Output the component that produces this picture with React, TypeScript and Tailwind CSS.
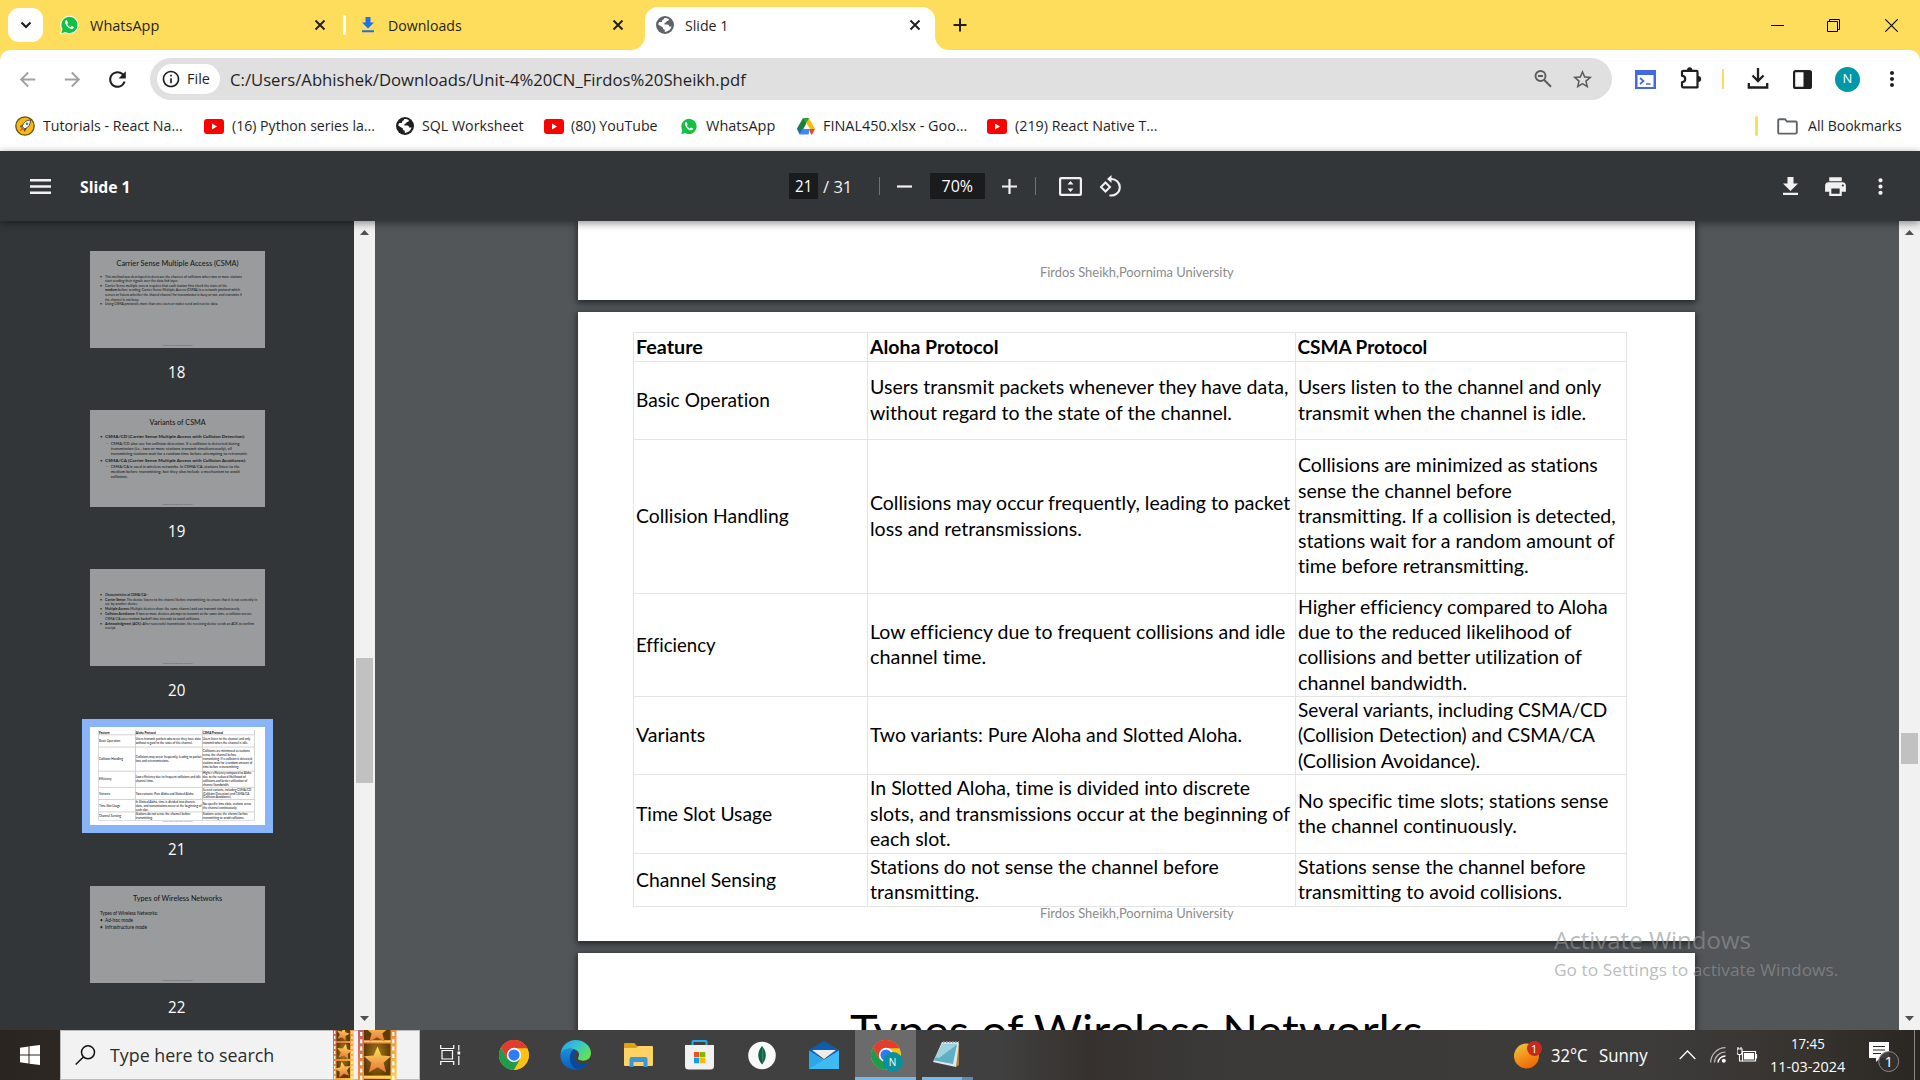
import { useLayoutEffect, useRef, useState, type ReactNode } from "react";
import {
  MdArrowBack, MdArrowForward, MdRefresh, MdInfoOutline, MdStarOutline, MdMoreVert, MdPrint,
} from "react-icons/md";

const UI = "font-['Open_Sans','Noto_Sans',sans-serif]";
const SLIDE = "font-[Lato,'Open_Sans',sans-serif] [font-variant-ligatures:none]";

/* One line of text, condensed or widened horizontally to take up exactly w pixels. */
function T({ w, className = "", children }: { w: number; className?: string; children: ReactNode }) {
  const ref = useRef<HTMLSpanElement>(null);
  const [k, setK] = useState(1);
  useLayoutEffect(() => {
    if (ref.current) setK(w / ref.current.offsetWidth);
  }, [w]);
  return (
    <span className={`block shrink-0 ${className}`} style={{ width: w }}>
      <span ref={ref} className="inline-block origin-left whitespace-nowrap" style={{ transform: `scaleX(${k})` }}>
        {children}
      </span>
    </span>
  );
}

function Cross({ className = "" }) {
  return (
    <svg className={`h-3 w-3 shrink-0 ${className}`} viewBox="0 0 12 12">
      <path d="M1.5 1.5l9 9M10.5 1.5l-9 9" stroke="#1f1f1f" strokeWidth="1.9" />
    </svg>
  );
}

function Globe({ className = "" }) {
  return (
    <svg className={`h-[18px] w-[18px] shrink-0 ${className}`} viewBox="0 0 18 18">
      <circle cx="9" cy="9" r="9" fill="currentColor" />
      <path d="M8 2.200c2-.4 4 .2 5 1.300-.3 1.300-1.200 1.500-2.300 1.600-.2 1.300-.7 1.700-2.200 1.800v1.600h3c1.200.2 1.500 1 1.600 2.100h2.400c-.6 2.800-3.200 5.200-6.700 5.300v-2.100c-1.400-.2-1.900-.9-1.900-2.300L2.200 8.600c.2-1 .5-1.900 1-2.600h2.700C6 4.200 6.800 3.400 8 3.300z" fill="#fff" />
    </svg>
  );
}

function WhatsAppIcon({ className = "" }) {
  return (
    <svg className={`shrink-0 ${className}`} viewBox="0 0 20 20">
      <path d="M.6 19.4l1.3-4.9A9.2 9.2 0 1 1 5.4 18z" fill="#fff" stroke="#fff" strokeWidth="1" />
      <path d="M1.3 18.7l1.3-4.5A8.5 8.5 0 1 1 5.7 17.3z" fill="#12c143" />
      <path d="M7.4 5.4c-.3-.6-.9-.5-1.300-.1-1.300 1.300-.9 3.200 1.100 5.700 2.300 2.700 4.600 3.700 6.300 2.900.9-.5 1.100-1.200 1-1.700l-2.200-1.200c-.5 0-.9 1.100-1.400 1.100-1-.3-2.900-2-3.200-3 0-.5.8-.9.800-1.400z" fill="#fff" />
    </svg>
  );
}

function YouTubeIcon({ className = "" }) {
  return (
    <svg className={`h-[15px] w-5 shrink-0 ${className}`} viewBox="0 0 20 15">
      <rect width="20" height="15" rx="3" fill="#f00" />
      <path d="M8 4.500l5 3-5 3z" fill="#fff" />
    </svg>
  );
}

function DriveIcon({ className = "" }) {
  return (
    <svg className={`h-[17px] w-[18px] shrink-0 ${className}`} viewBox="0 0 18 17">
      <path d="M6 0h3v6L4 15.500 0 10.500z" fill="#188038" />
      <path d="M6 0h6l6 11h-5z" fill="#fbbc04" />
      <path d="M6 0h6L9 5.500z" fill="#2a9d4e" />
      <path d="M0 11h5.500l-2.800 5.500z" fill="#1967d2" />
      <path d="M5.500 11H13l-1.500 5.500h-9z" fill="#4285f4" />
      <path d="M12.500 11H18l-3 5.500h-1.200z" fill="#ea4335" />
    </svg>
  );
}

function RocketCoin() {
  return (
    <svg className="h-5 w-5 shrink-0" viewBox="0 0 20 20">
      <circle cx="10" cy="10" r="9.200" fill="#f5b914" stroke="#6b5416" strokeWidth="1.300" />
      <path d="M15.500 4c-4 0-7 2.500-8.300 6.500l2.500 2.500c3.800-1.500 5.800-4.500 5.800-9z" fill="#fff" stroke="#3d3426" strokeWidth=".9" />
      <path d="M7.500 9L5 10.500l2 .8zM11 12.700L9.700 15.500 8.800 13z" fill="#3b7bb8" stroke="#3d3426" strokeWidth=".5" />
      <path d="M7 11l-2.500 4.500L9 13z" fill="#e8552b" />
      <circle cx="12" cy="7.800" r="1.300" fill="#3b7bb8" />
    </svg>
  );
}

function TabStrip() {
  return (
    <div className="flex h-[50px] items-center bg-[#ffdd5c] pl-2 text-[14.5px] text-[#1f1f1f]">
      <div className="flex h-[34px] w-[35px] shrink-0 items-center justify-center rounded-[11px] bg-white">
        <svg className="h-3 w-3" viewBox="0 0 12 12"><path d="M1.500 3.500L6 8l4.500-4.500" fill="none" stroke="#1f1f1f" strokeWidth="2.200" /></svg>
      </div>
      <WhatsAppIcon className="ml-[17px] h-5 w-[19px]" />
      <T w={69} className="ml-[11px] pt-px">WhatsApp</T>
      <Cross className="ml-[155px]" />
      <div className="ml-[17px] h-5 w-[3px] shrink-0 rounded bg-white" />
      <svg className="ml-[15px] h-4 w-[14px] shrink-0" viewBox="0 0 14 16">
        <path d="M4.500 0h5v5.500H13L7 11.500 1 5.500h3.500zM1 13.300h12v2H1z" fill="#1a73e8" />
      </svg>
      <T w={74} className="ml-[13px] pt-px">Downloads</T>
      <Cross className="ml-[150px]" />
      <div className="relative ml-[21px] flex h-[43px] w-[290px] shrink-0 items-center self-end rounded-t-[13px] bg-white pb-[7px] pl-[11px]">
        <svg className="absolute bottom-0 -left-[14px] h-[14px] w-[14px]" viewBox="0 0 14 14"><path d="M14 0v14H0A14 14 0 0 0 14 0z" fill="#fff" /></svg>
        <svg className="absolute bottom-0 -right-[14px] h-[14px] w-[14px]" viewBox="0 0 14 14"><path d="M0 0v14h14A14 14 0 0 1 0 0z" fill="#fff" /></svg>
        <Globe className="text-[#5f6368]" />
        <T w={43} className="ml-[11px] pt-px">Slide 1</T>
        <Cross className="ml-[181px]" />
      </div>
      <svg className="ml-[18px] h-[14px] w-[14px] shrink-0" viewBox="0 0 14 14"><path d="M7 .5v13M.5 7h13" stroke="#1f1f1f" strokeWidth="2" /></svg>
      <svg className="ml-auto h-[13px] w-[13px] shrink-0" viewBox="0 0 13 13"><path d="M0 6.500h13" stroke="#000" /></svg>
      <svg className="ml-[43px] h-[13px] w-[13px] shrink-0" viewBox="0 0 13 13"><path d="M.5 2.500h10v10H.5zM2.500 2.500v-2h10v10h-2" fill="none" stroke="#000" /></svg>
      <svg className="ml-[45px] mr-[22px] h-[13px] w-[13px] shrink-0" viewBox="0 0 13 13"><path d="M.3 .3l12.400 12.400M12.700 .3L.3 12.700" stroke="#000" strokeWidth="1.100" /></svg>
    </div>
  );
}

function AddressBar() {
  return (
    <div className="flex h-[58px] items-center rounded-t-[10px] bg-white text-[#1f1f1f]">
      <MdArrowBack className="ml-[16px] h-[23px] w-[23px] shrink-0 text-[#a0a0a0]" />
      <MdArrowForward className="ml-[22px] h-[23px] w-[23px] shrink-0 text-[#a0a0a0]" />
      <MdRefresh className="ml-[21px] h-[25px] w-[25px] shrink-0" />
      <div className="ml-5 flex h-[42px] w-[1462px] shrink-0 items-center rounded-full bg-[#e0e0e0] pl-[7px]">
        <div className="flex h-[30px] w-[63px] shrink-0 items-center rounded-full bg-white pl-[4px]">
          <MdInfoOutline className="h-[20px] w-[20px] shrink-0" />
          <T w={23} className="ml-[6px] text-[14.5px]">File</T>
        </div>
        <T w={516} className="ml-[10px] pt-px text-[16px]">C:/Users/Abhishek/Downloads/Unit-4%20CN_Firdos%20Sheikh.pdf</T>
        <svg className="ml-[787px] h-5 w-5 shrink-0" viewBox="0 0 20 20">
          <circle cx="7.500" cy="7" r="5" fill="none" stroke="#5c5c5c" strokeWidth="1.900" />
          <path d="M5 7h5M11 10.700l7 7" stroke="#5c5c5c" strokeWidth="2" />
        </svg>
        <MdStarOutline className="ml-[18px] h-[23px] w-[23px] shrink-0 text-[#5c5c5c]" />
      </div>
      <svg className="ml-[23px] h-[19px] w-[21px] shrink-0" viewBox="0 0 21 19">
        <path d="M0 0h21v19H0z" fill="#4169e1" />
        <path d="M2.500 5h16v12h-16z" fill="#fff" />
        <path d="M5 8l3.500 3L5 14M11 14h4.500" fill="none" stroke="#4169e1" strokeWidth="1.700" />
      </svg>
      <svg className="ml-[24px] h-[24px] w-[22px] shrink-0 -mt-[2px]" viewBox="0 0 22 24">
        <path d="M4 4.800h12.500q1 0 1 1v15.500H3q-1 0-1-1v-4q3.200-.6 3.200-3.300T2 9.700V6q0-1.200 2-1.200z" fill="none" stroke="#1f1f1f" strokeWidth="2.200" strokeLinejoin="round" />
        <path d="M7 4.500a2.700 3.300 0 0 1 5.400 0zM18 10a3.200 3 0 0 1 0 6z" fill="#1f1f1f" />
      </svg>
      <div className="ml-[20px] h-5 w-[2px] shrink-0 bg-[#ffdd5c]" />
      <svg className="ml-[23px] h-[22px] w-[22px] shrink-0" viewBox="0 0 22 22">
        <path d="M11 0v12.500M5.500 7.500L11 13l5.500-5.500M1.800 15v4.500h18.400V15" fill="none" stroke="#1f1f1f" strokeWidth="2.300" />
      </svg>
      <svg className="ml-[24px] h-[19px] w-[19px] shrink-0" viewBox="0 0 19 19">
        <rect x="1.100" y="1.100" width="16.800" height="16.800" rx="1.500" fill="none" stroke="#1f1f1f" strokeWidth="2.200" />
        <path d="M10.500 1h7v17h-7z" fill="#1f1f1f" />
      </svg>
      <div className="ml-[23px] flex h-[25px] w-[25px] shrink-0 items-center justify-center rounded-full bg-[#0097a7] text-[13px] text-white">N</div>
      <MdMoreVert className="ml-[20px] h-[24px] w-[24px] shrink-0" />
    </div>
  );
}

function Bookmarks() {
  return (
    <div className="flex h-[43px] items-center bg-white pb-[7px] pl-[15px] text-[14.5px] text-[#1f1f1f]">
      <RocketCoin />
      <T w={140} className="ml-[8px]">Tutorials - React Na...</T>
      <YouTubeIcon className="ml-[21px]" />
      <T w={143} className="ml-[8px]">(16) Python series la...</T>
      <Globe className="ml-[21px]" />
      <T w={101} className="ml-[8px]">SQL Worksheet</T>
      <YouTubeIcon className="ml-[21px]" />
      <T w={87} className="ml-[7px]">(80) YouTube</T>
      <WhatsAppIcon className="ml-[22px] h-[19px] w-[18px]" />
      <T w={69} className="ml-[8px]">WhatsApp</T>
      <DriveIcon className="ml-[22px]" />
      <T w={144} className="ml-[8px]">FINAL450.xlsx - Goo...</T>
      <YouTubeIcon className="ml-[20px]" />
      <T w={143} className="ml-[8px]">(219) React Native T...</T>
      <div className="ml-auto h-5 w-[3px] shrink-0 rounded bg-[#ffdd5c]" />
      <svg className="ml-[19px] h-[17px] w-[21px] shrink-0" viewBox="0 0 21 17">
        <path d="M2.500 1.200h5.500l2 2.300h8.500q1.300 0 1.300 1.300v9.500q0 1.300-1.300 1.300h-16q-1.300 0-1.300-1.300v-11.800q0-1.300 1.300-1.300z" fill="none" stroke="#5f6368" strokeWidth="1.900" />
      </svg>
      <T w={94} className="ml-[10px] mr-[18px]">All Bookmarks</T>
    </div>
  );
}

function PdfHeader() {
  return (
    <div className="relative z-10 flex h-[70px] shrink-0 items-center bg-[#323639] text-[16px] text-[#f1f1f1] shadow-[0_2px_8px_rgba(0,0,0,0.45)]">
      <svg className="ml-[30px] h-[15px] w-[21px] shrink-0" viewBox="0 0 21 15"><path d="M0 1.300h21M0 7.500h21M0 13.700h21" stroke="#f1f1f1" strokeWidth="2.400" /></svg>
      <T w={50} className="ml-[29px] pt-px font-bold text-white">Slide 1</T>
      <div className="ml-[659px] flex h-[26px] w-[29px] shrink-0 items-center justify-center bg-[#191b1c] text-white"><T w={17}>21</T></div>
      <T w={29} className="ml-[5px] pt-px">/ 31</T>
      <div className="ml-[27px] h-[18px] w-px shrink-0 bg-[#6f7274]" />
      <svg className="ml-[17px] h-[15px] w-[15px] shrink-0" viewBox="0 0 15 15"><path d="M0 7.500h15" stroke="#f1f1f1" strokeWidth="2.200" /></svg>
      <div className="ml-[18px] flex h-[26px] w-[55px] shrink-0 items-center justify-center bg-[#191b1c] text-white"><T w={32}>70%</T></div>
      <svg className="ml-[17px] h-[15px] w-[15px] shrink-0" viewBox="0 0 15 15"><path d="M0 7.500h15M7.500 0v15" stroke="#f1f1f1" strokeWidth="2.200" /></svg>
      <div className="ml-[18px] h-[18px] w-px shrink-0 bg-[#6f7274]" />
      <svg className="ml-[23px] h-[19px] w-[23px] shrink-0" viewBox="0 0 23 19">
        <rect x="1.100" y="1.100" width="20.800" height="16.800" rx="1" fill="none" stroke="#f1f1f1" strokeWidth="2.200" />
        <path d="M8.500 7.500l3-3.500 3 3.500zM8.500 11.500l3 3.500 3-3.500z" fill="#f1f1f1" />
      </svg>
      <svg className="ml-[16px] h-[22px] w-[23px] shrink-0" viewBox="0 0 23 22">
        <path d="M7.500 7.500l4.500 4.500-4.500 4.500L3 12z" fill="none" stroke="#f1f1f1" strokeWidth="2" />
        <path d="M12.500 4a8.300 8.300 0 1 1-1 16.300" fill="none" stroke="#f1f1f1" strokeWidth="2.100" />
        <path d="M13.500 0v8L9 4z" fill="#f1f1f1" />
      </svg>
      <svg className="ml-auto h-[18px] w-[15px] shrink-0" viewBox="0 0 15 18"><path d="M4.500 0h6v6.500H15L7.500 14 0 6.500h4.500zM0 15.800h15V18H0z" fill="#f1f1f1" /></svg>
      <MdPrint className="ml-[25px] h-[25px] w-[25px] shrink-0" />
      <MdMoreVert className="ml-[20px] mr-[27px] h-[25px] w-[25px] shrink-0" />
    </div>
  );
}

type Line = [string, number];
type Row = { h: string; cells: [Line[], Line[], Line[]] };

const rows: Row[] = [
  { h: "h-[28.5px] font-bold", cells: [[["Feature", 66.5]], [["Aloha Protocol", 128]], [["CSMA Protocol", 130]]] },
  {
    h: "h-[78px]",
    cells: [
      [["Basic Operation", 134]],
      [["Users transmit packets whenever they have data,", 418], ["without regard to the state of the channel.", 362]],
      [["Users listen to the channel and only", 303.5], ["transmit when the channel is idle.", 288]],
    ],
  },
  {
    h: "h-[154px]",
    cells: [
      [["Collision Handling", 152.5]],
      [["Collisions may occur frequently, leading to packet", 420], ["loss and retransmissions.", 212]],
      [
        ["Collisions are minimized as stations", 299.5], ["sense the channel before", 213.5],
        ["transmitting. If a collision is detected,", 318], ["stations wait for a random amount of", 317],
        ["time before retransmitting.", 231],
      ],
    ],
  },
  {
    h: "h-[103.5px]",
    cells: [
      [["Efficiency", 80]],
      [["Low efficiency due to frequent collisions and idle", 415], ["channel time.", 116]],
      [
        ["Higher efficiency compared to Aloha", 310], ["due to the reduced likelihood of", 273.5],
        ["collisions and better utilization of", 283.5], ["channel bandwidth.", 169],
      ],
    ],
  },
  {
    h: "h-[78px]",
    cells: [
      [["Variants", 69]],
      [["Two variants: Pure Aloha and Slotted Aloha.", 372]],
      [["Several variants, including CSMA/CD", 309], ["(Collision Detection) and CSMA/CA", 297], ["(Collision Avoidance).", 182.5]],
    ],
  },
  {
    h: "h-[78.5px]",
    cells: [
      [["Time Slot Usage", 136]],
      [["In Slotted Aloha, time is divided into discrete", 380], ["slots, and transmissions occur at the beginning of", 420], ["each slot.", 81]],
      [["No specific time slots; stations sense", 310.5], ["the channel continuously.", 218.5]],
    ],
  },
  {
    h: "h-[53.5px]",
    cells: [
      [["Channel Sensing", 139.5]],
      [["Stations do not sense the channel before", 348.5], ["transmitting.", 109]],
      [["Stations sense the channel before", 287.5], ["transmitting to avoid collisions.", 264.5]],
    ],
  },
];

function SlideFooter() {
  return <T w={194} className="mx-auto text-[12.5px] leading-[16px] text-[#8b8b8b]">Firdos Sheikh,Poornima University</T>;
}

function TableSlide({ mini = false }) {
  const line = mini ? "shadow-[0_0_0_3px_#cfcfcf]" : "border-b border-r border-[#e4e4e4]";
  return (
    <div className={`${SLIDE} flex h-[629px] w-[1117px] flex-col bg-white pt-[20px] text-black`}>
      <div className="ml-[54.5px] w-[994px] border-l border-t border-[#e4e4e4] text-[19px] leading-[25.25px]">
        {rows.map((r, i) => (
          <div key={i} className={`grid grid-cols-[234px_428px_331px] ${r.h}`}>
            {r.cells.map((c, j) => (
              <div key={j} className={`flex flex-col justify-center pb-px pl-[2px] ${line}`}>
                {c.map(([t, w]) => <T key={t} w={w}>{t}</T>)}
              </div>
            ))}
          </div>
        ))}
      </div>
      <div className="-mt-px"><SlideFooter /></div>
    </div>
  );
}

type Item = { c: string; mark?: string; bold?: string; text?: string; w: number };

function BulletSlide({ title, tw, items }: { title: string; tw: number; items: Item[] }) {
  return (
    <div className={`${SLIDE} flex h-[629px] w-[1117px] flex-col bg-white pb-[20px] font-medium text-black`}>
      <div className="h-[148px] pt-[48px] text-[45px] leading-[58px]">{title && <T w={tw} className="mx-auto">{title}</T>}</div>
      {items.map((it, i) => (
        <div key={i} className={`flex ${it.c}`}>
          <span className="w-[32px] shrink-0">{it.mark}</span>
          <T w={it.w}><b>{it.bold}</b>{it.text}</T>
        </div>
      ))}
      <div className="mt-auto"><SlideFooter /></div>
    </div>
  );
}

const A = "pl-[64px] text-[22px] leading-[29px]";
const B = "pl-[64px] text-[29px] leading-[40px]";
const C = "pl-[100px] text-[25px] leading-[32px]";
const D = "pl-[64px] pt-[4px] text-[22px] leading-[28px]";
const E = "pl-[64px] text-[22px] leading-[28px]";
const F = "pl-[64px] text-[30px] leading-[46px]";

const s18: Item[] = [
  { c: A, mark: "•", text: "This method was developed to decrease the chances of collisions when two or more stations", w: 874 },
  { c: A, text: "start sending their signals over the data link layer.", w: 466 },
  { c: A, mark: "•", text: "Carrier Sense multiple access requires that each station first check the state of the", w: 779 },
  { c: A, bold: "medium ", text: "before sending. Carrier Sense Multiple Access (CSMA) is a network protocol which", w: 862 },
  { c: A, text: "senses or listens whether the shared channel for transmission is busy or not, and transmits if", w: 874 },
  { c: A, text: "the channel is not busy.", w: 217 },
  { c: A, mark: "•", text: "Using CSMA protocols, more than one users or nodes send and receive data.", w: 721 },
];
const s19: Item[] = [
  { c: B, mark: "•", bold: "CSMA/CD (Carrier Sense Multiple Access with Collision Detection):", w: 893 },
  { c: "mt-[8px] pl-[100px] text-[25px] leading-[32px]", mark: "–", text: "CSMA/CD also use for collision detection. If a collision is detected during", w: 823 },
  { c: C, text: "transmission (i.e., two or more stations transmit simultaneously), all", w: 772 },
  { c: C, text: "transmitting stations wait for a random time before attempting to retransmit.", w: 874 },
  { c: "mt-[8px] pl-[64px] text-[29px] leading-[40px]", mark: "•", bold: "CSMA/CA (Carrier Sense Multiple Access with Collision Avoidance):", w: 900 },
  { c: "mt-[5px] pl-[100px] text-[25px] leading-[32px]", mark: "–", text: "CSMA/CA is used in wireless networks. In CSMA/CA, stations listen to the", w: 823 },
  { c: C, text: "medium before transmitting, but they also include a mechanism to avoid", w: 823 },
  { c: C, text: "collisions.", w: 108 },
];
const s20: Item[] = [
  { c: "mt-[2px] pl-[64px] text-[22px] leading-[28px]", mark: "•", bold: "Characteristics of CSMA/CA:-", w: 274 },
  { c: D, mark: "•", bold: "Carrier Sense: ", text: "The device listens to the channel before transmitting, to ensure that it is not currently in", w: 970 },
  { c: E, text: "use by another device.", w: 210 },
  { c: D, mark: "•", bold: "Multiple Access: ", text: "Multiple devices share the same channel and can transmit simultaneously.", w: 861 },
  { c: D, mark: "•", bold: "Collision Avoidance: ", text: "If two or more devices attempt to transmit at the same time, a collision occurs.", w: 938 },
  { c: E, text: "CSMA/CA uses random backoff time intervals to avoid collisions.", w: 606 },
  { c: D, mark: "•", bold: "Acknowledgment (ACK): ", text: "After successful transmission, the receiving device sends an ACK to confirm", w: 951 },
  { c: E, text: "receipt.", w: 70 },
];
const s22: Item[] = [
  { c: "pl-[32px] text-[30px] leading-[46px]", text: "Types of Wireless Networks:", w: 370 },
  { c: F, mark: "•", text: "Ad-hoc mode", w: 179 },
  { c: F, mark: "•", text: "Infrastructure mode", w: 268 },
];

function Thumb({ n, cls, children }: { n: number; cls: string; children: ReactNode }) {
  const active = n === 21;
  return (
    <div className={`flex shrink-0 flex-col items-center ${cls}`}>
      <div className={active ? "h-[114px] w-[191px] bg-[#8ab4f8] p-2" : "h-[97px] w-[175px] opacity-50"}>
        <div className={active ? "h-[98px] w-[175px] overflow-hidden bg-white" : "h-[97px] w-[175px] overflow-hidden bg-white"}>
          <div className="h-[629px] w-[1117px] origin-top-left scale-[0.1567]">{children}</div>
        </div>
      </div>
      <div className={`pr-px text-[16px] leading-[22px] text-white ${active ? "mt-[5px]" : "mt-[13px]"}`}><T w={17}>{n}</T></div>
    </div>
  );
}

function Scrollbar({ thumb }: { thumb: string }) {
  return (
    <div className="flex h-full w-[21px] shrink-0 flex-col items-center bg-[#f1f1f1]">
      <svg className="mt-[9px] h-[5px] w-[9px] shrink-0" viewBox="0 0 9 5"><path d="M0 5L4.500 0 9 5z" fill="#505050" /></svg>
      <div className={`w-[17px] bg-[#c1c1c1] ${thumb}`} />
      <svg className="mt-auto mb-[9px] h-[5px] w-[9px] shrink-0" viewBox="0 0 9 5"><path d="M0 0L4.500 5 9 0z" fill="#505050" /></svg>
    </div>
  );
}

const pageShadow = "shadow-[0_2px_6px_1px_rgba(0,0,0,0.55)]";

function Viewer() {
  return (
    <div className="flex h-[809px] overflow-hidden bg-[#525659]">
      <div className="flex h-full w-[354px] shrink-0 flex-col overflow-hidden bg-[#323639]">
        <Thumb n={18} cls="mt-[30px]">
          <BulletSlide title="Carrier Sense Multiple Access (CSMA)" tw={779} items={s18} />
        </Thumb>
        <Thumb n={19} cls="mt-[27px]"><BulletSlide title="Variants of CSMA" tw={358} items={s19} /></Thumb>
        <Thumb n={20} cls="mt-[27px]"><BulletSlide title="" tw={0} items={s20} /></Thumb>
        <Thumb n={21} cls="mt-[18px]"><TableSlide mini /></Thumb>
        <Thumb n={22} cls="mt-[26px]"><BulletSlide title="Types of Wireless Networks" tw={568} items={s22} /></Thumb>
      </div>
      <Scrollbar thumb="mt-[423px] h-[125px]" />
      <div className={`${SLIDE} flex flex-1 flex-col items-start gap-3 overflow-hidden pl-[203px] text-black`}>
        <div className={`flex h-[79px] w-[1117px] shrink-0 flex-col justify-end bg-white pb-[19px] ${pageShadow}`}><SlideFooter /></div>
        <div className={`shrink-0 ${pageShadow}`}><TableSlide /></div>
        <div className={`h-[629px] w-[1117px] shrink-0 bg-white pt-[47px] text-[45px] leading-[60px] ${pageShadow}`}>
          <T w={573} className="mx-auto">Types of Wireless Networks</T>
        </div>
      </div>
      <Scrollbar thumb="mt-[498px] h-[31px]" />
    </div>
  );
}

function ChromeLogo({ className = "" }) {
  return (
    <svg className={`shrink-0 ${className}`} viewBox="0 0 48 48">
      <circle cx="24" cy="24" r="24" fill="#fbc116" />
      <path d="M3.200 12A24 24 0 0 0 24 48L34.400 30 24 24 13.600 30z" fill="#229a4b" />
      <path d="M24 13h20.800A24 24 0 0 1 24 48l10.400-18z" fill="#fbc116" />
      <path d="M3.200 12A24 24 0 0 1 44.800 12l.5 1H24L13.600 30z" fill="#e33b2e" />
      <circle cx="24" cy="24" r="11.500" fill="#fff" />
      <circle cx="24" cy="24" r="9" fill="#2f7cf0" />
    </svg>
  );
}

function EdgeLogo() {
  return (
    <svg className="ml-[31px] h-[30px] w-[31px] shrink-0" viewBox="0 0 31 30">
      <defs>
        <linearGradient id="edgeTop" x1="0" y1="0" x2="1" y2="0.600">
          <stop offset="0" stopColor="#1f9fe4" /><stop offset=".5" stopColor="#35c3d8" /><stop offset="1" stopColor="#66e04f" />
        </linearGradient>
        <linearGradient id="edgeBody" x1="0" y1="0" x2="0" y2="1">
          <stop offset="0" stopColor="#1c8fdc" /><stop offset="1" stopColor="#0c5cb8" />
        </linearGradient>
      </defs>
      <path d="M.5 14C1.500 5.500 8 0 15.500 0 24 0 31 6 31 13c0 5-3.500 7.700-8 7.700-3.200 0-5.500-1.200-5-2.600 1.800-2.600 1.500-6-2-8.100C10 7 3 9.500.5 14z" fill="url(#edgeTop)" />
      <path d="M.5 14C2.500 9 9 7.500 13.500 9.200 9 13 9.500 25 20 25.200c4 .1 6.800-1.700 8.400-2.600C25.500 27 20.500 30 15.500 30 7 30-.5 23 .5 14z" fill="url(#edgeBody)" />
      <path d="M13.500 9.200C7 15 9.500 28 18 29.500c4.500-.6 8.500-3.300 10.400-6.900-4.400 2.300-9 2.300-12-.6-3.200-3-2.700-8.500-.2-11.500z" fill="#0a4a9c" />
    </svg>
  );
}

const star = "M0-10L2.900-3.300 10-2.800 4.500 2 6.400 9.200 0 5.300-6.400 9.200-4.500 2-10-2.800-2.900-3.300z";

function FilmArt() {
  return (
    <svg className="h-[50px] w-[64px] shrink-0" viewBox="0 0 64 50">
      <defs>
        <linearGradient id="film" x1="0" y1="0" x2="1" y2="1">
          <stop offset="0" stopColor="#c65a6a" /><stop offset=".45" stopColor="#f08a3a" /><stop offset="1" stopColor="#ffd24a" />
        </linearGradient>
        <linearGradient id="starFill" x1="0" y1="0" x2="0" y2="1">
          <stop offset="0" stopColor="#ffe35e" /><stop offset="1" stopColor="#e8743a" />
        </linearGradient>
        <radialGradient id="frame"><stop offset="0" stopColor="#a87a1a" /><stop offset="1" stopColor="#5d3c06" /></radialGradient>
      </defs>
      <rect width="20.500" height="50" fill="url(#film)" />
      <path d="M3.500 0h13.500v11H3.500zM3.500 13h13.500v16H3.500zM3.500 31h13.500v17H3.500z" fill="url(#frame)" />
      <path d="M1.700 1v50M18.900 1v50" stroke="#fff3d8" strokeWidth="1.400" strokeDasharray="3 2" />
      <path d={star} transform="translate(10 4) scale(.66) rotate(14)" fill="url(#starFill)" />
      <path d={star} transform="translate(11.500 21.500) scale(.78) rotate(10)" fill="url(#starFill)" />
      <path d={star} transform="translate(10 39.500) scale(.8) rotate(-10)" fill="url(#starFill)" />
      <rect x="25" width="38.500" height="50" fill="url(#film)" />
      <path d="M31 0h26.500v10H31zM31 13.500h26.500v32H31zM31 49h26.500v1H31z" fill="url(#frame)" />
      <path d="M31 11.500h26.500M31 47h26.500" stroke="#ffe04f" strokeWidth="1.500" />
      <path d="M28.200 2v50M60.300 2v50" stroke="#fff" strokeWidth="2.200" strokeDasharray="4 3.300" />
      <path d={star} transform="translate(44 1) scale(1.200)" fill="url(#starFill)" />
      <path d={star} transform="translate(44.500 30) scale(1.350)" fill="url(#starFill)" />
    </svg>
  );
}

function Taskbar() {
  return (
    <div className="flex h-[50px] items-center bg-[linear-gradient(90deg,#2b2521_0,#2d2723_60px,#3f3f3f_420px,#404040_1000px,#36312e_1090px,#3a3937_1200px,#3d3c3b_1650px,#37332f_1800px,#2a2622_1920px)] text-white">
      <svg className="ml-5 h-5 w-5 shrink-0" viewBox="0 0 20 20"><path d="M0 2.800L8.500 1.500v8H0zM9.500 1.300L20 0v9.500H9.500zM0 10.500h8.500v8L0 17.200zM9.500 10.500H20V20L9.500 18.700z" fill="#fff" /></svg>
      <div className="ml-5 flex h-[50px] w-[360px] shrink-0 items-center border border-[#bdbdbd] bg-[#f2f2f2] pl-[14px]">
        <svg className="h-5 w-[21px] shrink-0" viewBox="0 0 21 20"><circle cx="13" cy="7.300" r="6.500" fill="none" stroke="#111" strokeWidth="1.500" /><path d="M8.400 12L.7 19.500" stroke="#111" strokeWidth="1.500" /></svg>
        <T w={164} className="ml-[14px] text-[18.500px] text-[#2b2b2b]">Type here to search</T>
        <div className="ml-[59px] shrink-0"><FilmArt /></div>
      </div>
      <svg className="ml-[20px] h-[20px] w-[21px] shrink-0" viewBox="0 0 21 20">
        <path d="M.7 0v3.500h13V0M2 5.500h10.500v8.500H2zM.7 20v-3.500h13V20M18.800 0v5.500M18.800 11v9" fill="none" stroke="#fff" strokeWidth="1.200" />
        <path d="M17.500 6.500h2.700v3h-2.700z" fill="#fff" />
      </svg>
      <ChromeLogo className="ml-[38px] h-[30px] w-[30px]" />
      <EdgeLogo />
      <svg className="ml-[33px] h-[26px] w-[29px] shrink-0" viewBox="0 0 29 26">
        <path d="M1 1h9.500l2.500 3h14q1 0 1 1v3H0V2q0-1 1-1z" fill="#e2a00c" />
        <path d="M0 6h12l2.500-2H28q1 0 1 1v18q0 1-1 1H1q-1 0-1-1z" fill="#fdd365" />
        <path d="M5.500 25V17q0-2 2-2h14q2 0 2 2v8h-4v-5h-10v5z" fill="#3a97dd" />
      </svg>
      <svg className="ml-[32px] h-[30px] w-[29px] shrink-0" viewBox="0 0 29 30">
        <path d="M7.500 6V2q0-1 1-1h12q1 0 1 1v4" fill="none" stroke="#28aaf0" strokeWidth="2" />
        <path d="M0 5h29v21q0 3.500-3.500 3.500h-22Q0 29.500 0 26z" fill="#f1f1f1" />
        <path d="M9 12h5.300v5.300H9z" fill="#f25022" /><path d="M15 12h5.300v5.300H15z" fill="#7fba00" />
        <path d="M9 18h5.300v5.300H9z" fill="#00a4ef" /><path d="M15 18h5.300v5.300H15z" fill="#ffb900" />
      </svg>
      <svg className="ml-[34px] h-[29px] w-[28px] shrink-0" viewBox="0 0 28 29">
        <circle cx="14" cy="14.500" r="13.800" fill="#f9f9f9" />
        <path d="M14 5c-5 5.500-5 13 0 18.500 5-5.500 5-13 0-18.500z" fill="#116149" />
        <path d="M14 5c2 6 2 12 0 18.500z" fill="#35855f" />
      </svg>
      <svg className="ml-[33px] h-[28px] w-[30px] shrink-0" viewBox="0 0 30 28">
        <path d="M0 9L15 0l15 9v5H0z" fill="#0f5cad" />
        <path d="M0 9.500l15 9 15-9V28H0z" fill="#2ea7ea" />
        <path d="M30 9.500V28H0z" fill="#44c2f7" opacity=".75" />
        <path d="M3 9h24l-12 9z" fill="#ececec" />
      </svg>
      <div className="ml-[16px] flex h-[50px] w-[61px] shrink-0 flex-col items-center border-b-[3px] border-[#76b9ed] bg-[#6c6b6b] pt-[10px]">
        <div className="relative">
          <ChromeLogo className="h-[30px] w-[30px]" />
          <div className="absolute left-[12px] top-[12px] flex h-5 w-5 items-center justify-center rounded-full bg-[#0b8f9d] text-[10px]">N</div>
        </div>
      </div>
      <div className="ml-[6px] flex h-[50px] w-[51px] shrink-0 flex-col">
        <svg className="ml-[11px] mt-[10px] h-[28px] w-[28px] shrink-0" viewBox="0 0 28 28">
          <path d="M26 4v21l-3 2V5z" fill="#a9803c" />
          <path d="M9 2h17l-3 25L0 22z" fill="#dfe9ec" />
          <path d="M9.500 4L24 4.500 20 24 1 20.500z" fill="#5fb0c4" />
          <path d="M9.500 4L24 4.500 6 18 2.500 17.500z" fill="#9fd3df" />
          <path d="M10 2.200h16" stroke="#999" strokeWidth="2" strokeDasharray="1.500 1.500" />
        </svg>
        <div className="mt-auto flex h-[3px]"><div className="w-10 bg-[#76b9ed]" /><div className="w-[11px] bg-[#5a8db5]" /></div>
      </div>
      <div className="relative ml-auto h-[28px] w-[28px] shrink-0">
        <svg className="h-[28px] w-[28px]" viewBox="0 0 28 28">
          <defs><linearGradient id="sun" x1=".2" y1="0" x2=".7" y2="1"><stop offset="0" stopColor="#f3c037" /><stop offset="1" stopColor="#ee6405" /></linearGradient></defs>
          <circle cx="12.500" cy="15" r="12.500" fill="url(#sun)" />
          <circle cx="20.500" cy="7.500" r="7.500" fill="#c42b1c" />
        </svg>
        <span className="absolute left-[17px] top-0 text-[11px] leading-[15px]">1</span>
      </div>
      <T w={37} className="ml-[9px] text-[17.500px]">32°C</T>
      <T w={49} className="ml-[11px] text-[17.500px]">Sunny</T>
      <svg className="ml-[31px] h-[10px] w-[17px] shrink-0" viewBox="0 0 17 10"><path d="M.7 9l7.800-8 7.800 8" fill="none" stroke="#fff" strokeWidth="1.300" /></svg>
      <svg className="ml-[14px] h-[16px] w-[16px] shrink-0" viewBox="0 0 16 16">
        <path d="M.7 15.500A15 15 0 0 1 15.500.7M4.500 15.500A11 11 0 0 1 15.500 5" fill="none" stroke="#bbb" strokeWidth="1.200" />
        <path d="M8 15.500A7.500 7.500 0 0 1 15.500 9" fill="none" stroke="#fff" strokeWidth="1.400" />
        <circle cx="13.800" cy="13.800" r="2" fill="#fff" />
      </svg>
      <svg className="ml-[11px] h-[16px] w-[21px] shrink-0" viewBox="0 0 21 16">
        <path d="M5.500 4.500h13v9.500h-13zM19.500 7v4.500" fill="none" stroke="#fff" strokeWidth="1.200" />
        <path d="M7 6h10v6.500H7z" fill="#fff" />
        <path d="M0 2h5v4l-1 1.500H1L0 6zM1 0v2M4 0v2M2.500 7v7H6" fill="none" stroke="#fff" strokeWidth="1.100" />
      </svg>
      <div className="ml-[12px] flex w-[76px] shrink-0 flex-col items-center pr-px text-[15px] leading-[23px]">
        <T w={33.5}>17:45</T>
        <T w={75}>11-03-2024</T>
      </div>
      <div className="relative ml-[23px] mt-[5px] h-[32px] w-[31px] shrink-0">
        <svg className="h-[32px] w-[31px]" viewBox="0 0 31 32">
          <path d="M0 0h20v16H11l-4 4v-4H0z" fill="#fff" />
          <path d="M4 4.500h12M4 8h12M4 11.500h8" stroke="#2d2926" strokeWidth="1.200" />
          <circle cx="19.700" cy="19.500" r="10" fill="#34302d" fillOpacity=".92" stroke="#8d8a88" />
        </svg>
        <span className="absolute left-[15.500px] top-[9px] text-[15px] leading-[21px]">1</span>
      </div>
      <div className="ml-[14px] mr-[5px] h-full w-px shrink-0 bg-[#8a8886]" />
    </div>
  );
}

export default function App() {
  return (
    <div className={`${UI} relative h-[1080px] w-[1920px] overflow-hidden bg-[#ffdd5c]`}>
      <TabStrip />
      <AddressBar />
      <Bookmarks />
      <PdfHeader />
      <Viewer />
      <Taskbar />
      <div className="absolute left-[1554px] top-[923px] text-[#929496]/65">
        <T w={197} className="text-[24px] leading-[34px]">Activate Windows</T>
        <T w={284} className="text-[16.500px] leading-[26px]">Go to Settings to activate Windows.</T>
      </div>
    </div>
  );
}
